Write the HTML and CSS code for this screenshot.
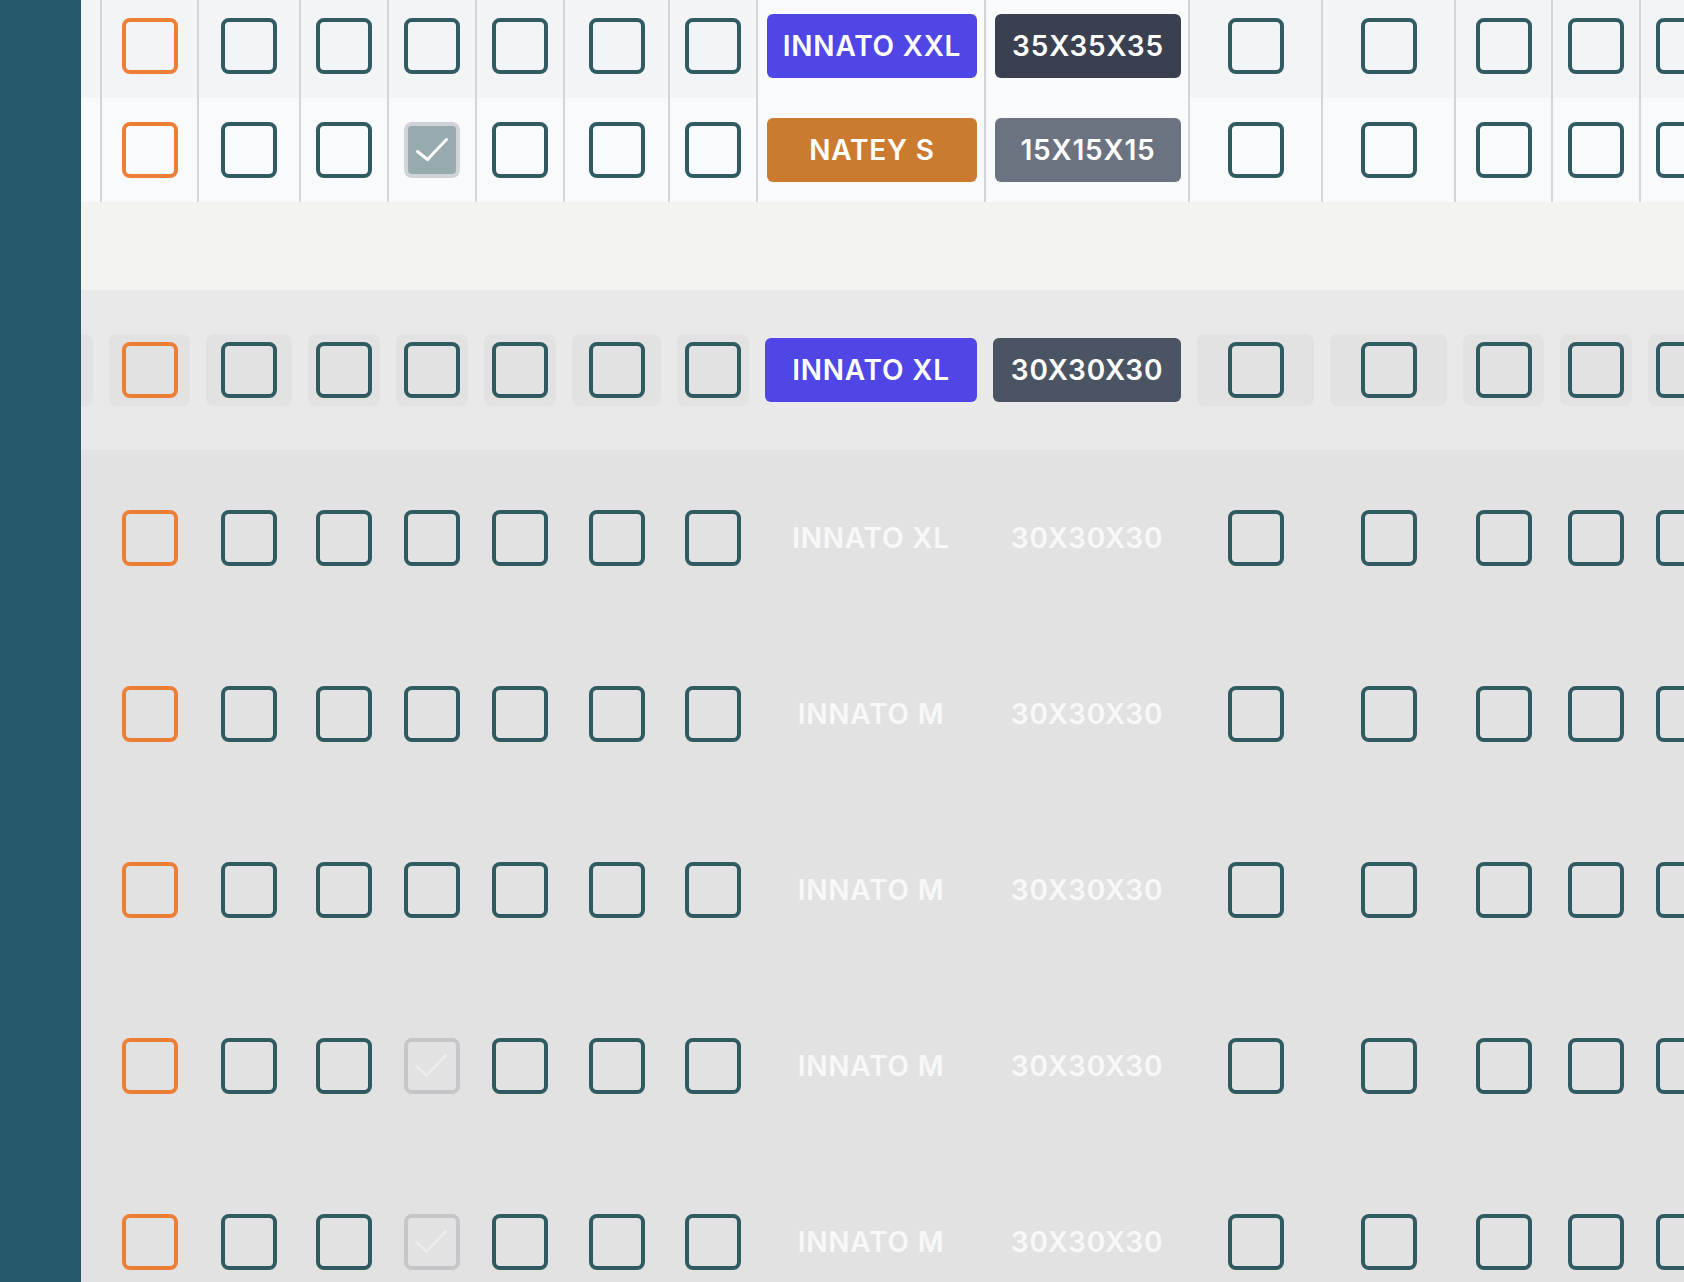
FILE: index.html
```html
<!DOCTYPE html>
<html>
<head>
<meta charset="utf-8">
<link rel="stylesheet" href="styles.css">
</head>
<body>
<div class="app">
  <aside class="sidebar"></aside>
  <main class="main">
    <div class="table">
      <div class="row row-a">
        <div class="cell"></div>
        <div class="cell"><span class="cb cb-orange"></span></div>
        <div class="cell"><span class="cb"></span></div>
        <div class="cell"><span class="cb"></span></div>
        <div class="cell"><span class="cb"></span></div>
        <div class="cell"><span class="cb"></span></div>
        <div class="cell"><span class="cb"></span></div>
        <div class="cell"><span class="cb"></span></div>
        <div class="cell cell-badge"><span class="badge badge-indigo">INNATO XXL</span></div>
        <div class="cell cell-badge"><span class="badge badge-dark">35X35X35</span></div>
        <div class="cell"><span class="cb"></span></div>
        <div class="cell"><span class="cb"></span></div>
        <div class="cell"><span class="cb"></span></div>
        <div class="cell"><span class="cb"></span></div>
        <div class="cell"><span class="cb"></span></div>
      </div>
      <div class="row row-b">
        <div class="cell"></div>
        <div class="cell"><span class="cb cb-orange"></span></div>
        <div class="cell"><span class="cb"></span></div>
        <div class="cell"><span class="cb"></span></div>
        <div class="cell"><span class="cb cb-checked"><svg viewBox="0 0 56 56"><path d="M13.5 29.5 L23.5 37.5 L42.5 17.5"/></svg></span></div>
        <div class="cell"><span class="cb"></span></div>
        <div class="cell"><span class="cb"></span></div>
        <div class="cell"><span class="cb"></span></div>
        <div class="cell cell-badge"><span class="badge badge-orange">NATEY S</span></div>
        <div class="cell cell-badge"><span class="badge badge-gray">15X15X15</span></div>
        <div class="cell"><span class="cb"></span></div>
        <div class="cell"><span class="cb"></span></div>
        <div class="cell"><span class="cb"></span></div>
        <div class="cell"><span class="cb"></span></div>
        <div class="cell"><span class="cb"></span></div>
      </div>
    </div>

    <div class="gap-band"></div>

    <div class="drag-row">
      <div class="dcell"></div>
      <div class="dcell"><span class="cb cb-orange"></span></div>
      <div class="dcell"><span class="cb"></span></div>
      <div class="dcell"><span class="cb"></span></div>
      <div class="dcell"><span class="cb"></span></div>
      <div class="dcell"><span class="cb"></span></div>
      <div class="dcell"><span class="cb"></span></div>
      <div class="dcell"><span class="cb"></span></div>
      <div class="dcell dcell-badge"><span class="badge badge-indigo">INNATO XL</span></div>
      <div class="dcell dcell-badge"><span class="badge badge-slate">30X30X30</span></div>
      <div class="dcell"><span class="cb"></span></div>
      <div class="dcell"><span class="cb"></span></div>
      <div class="dcell"><span class="cb"></span></div>
      <div class="dcell"><span class="cb"></span></div>
      <div class="dcell"><span class="cb"></span></div>
    </div>

    <div class="ghosts">
      <div class="grow">
        <div class="gcell"></div>
        <div class="gcell"><span class="cb cb-orange"></span></div>
        <div class="gcell"><span class="cb"></span></div>
        <div class="gcell"><span class="cb"></span></div>
        <div class="gcell"><span class="cb"></span></div>
        <div class="gcell"><span class="cb"></span></div>
        <div class="gcell"><span class="cb"></span></div>
        <div class="gcell"><span class="cb"></span></div>
        <div class="gcell"><span class="gtext">INNATO XL</span></div>
        <div class="gcell"><span class="gtext">30X30X30</span></div>
        <div class="gcell"><span class="cb"></span></div>
        <div class="gcell"><span class="cb"></span></div>
        <div class="gcell"><span class="cb"></span></div>
        <div class="gcell"><span class="cb"></span></div>
        <div class="gcell"><span class="cb"></span></div>
      </div>
      <div class="grow">
        <div class="gcell"></div>
        <div class="gcell"><span class="cb cb-orange"></span></div>
        <div class="gcell"><span class="cb"></span></div>
        <div class="gcell"><span class="cb"></span></div>
        <div class="gcell"><span class="cb"></span></div>
        <div class="gcell"><span class="cb"></span></div>
        <div class="gcell"><span class="cb"></span></div>
        <div class="gcell"><span class="cb"></span></div>
        <div class="gcell"><span class="gtext">INNATO M</span></div>
        <div class="gcell"><span class="gtext">30X30X30</span></div>
        <div class="gcell"><span class="cb"></span></div>
        <div class="gcell"><span class="cb"></span></div>
        <div class="gcell"><span class="cb"></span></div>
        <div class="gcell"><span class="cb"></span></div>
        <div class="gcell"><span class="cb"></span></div>
      </div>
      <div class="grow">
        <div class="gcell"></div>
        <div class="gcell"><span class="cb cb-orange"></span></div>
        <div class="gcell"><span class="cb"></span></div>
        <div class="gcell"><span class="cb"></span></div>
        <div class="gcell"><span class="cb"></span></div>
        <div class="gcell"><span class="cb"></span></div>
        <div class="gcell"><span class="cb"></span></div>
        <div class="gcell"><span class="cb"></span></div>
        <div class="gcell"><span class="gtext">INNATO M</span></div>
        <div class="gcell"><span class="gtext">30X30X30</span></div>
        <div class="gcell"><span class="cb"></span></div>
        <div class="gcell"><span class="cb"></span></div>
        <div class="gcell"><span class="cb"></span></div>
        <div class="gcell"><span class="cb"></span></div>
        <div class="gcell"><span class="cb"></span></div>
      </div>
      <div class="grow">
        <div class="gcell"></div>
        <div class="gcell"><span class="cb cb-orange"></span></div>
        <div class="gcell"><span class="cb"></span></div>
        <div class="gcell"><span class="cb"></span></div>
        <div class="gcell"><span class="cb cb-ghost-checked"><svg viewBox="0 0 56 56"><path d="M12.5 28 L22.5 37.5 L41.5 17.5"/></svg></span></div>
        <div class="gcell"><span class="cb"></span></div>
        <div class="gcell"><span class="cb"></span></div>
        <div class="gcell"><span class="cb"></span></div>
        <div class="gcell"><span class="gtext">INNATO M</span></div>
        <div class="gcell"><span class="gtext">30X30X30</span></div>
        <div class="gcell"><span class="cb"></span></div>
        <div class="gcell"><span class="cb"></span></div>
        <div class="gcell"><span class="cb"></span></div>
        <div class="gcell"><span class="cb"></span></div>
        <div class="gcell"><span class="cb"></span></div>
      </div>
      <div class="grow">
        <div class="gcell"></div>
        <div class="gcell"><span class="cb cb-orange"></span></div>
        <div class="gcell"><span class="cb"></span></div>
        <div class="gcell"><span class="cb"></span></div>
        <div class="gcell"><span class="cb cb-ghost-checked"><svg viewBox="0 0 56 56"><path d="M12.5 28 L22.5 37.5 L41.5 17.5"/></svg></span></div>
        <div class="gcell"><span class="cb"></span></div>
        <div class="gcell"><span class="cb"></span></div>
        <div class="gcell"><span class="cb"></span></div>
        <div class="gcell"><span class="gtext">INNATO M</span></div>
        <div class="gcell"><span class="gtext">30X30X30</span></div>
        <div class="gcell"><span class="cb"></span></div>
        <div class="gcell"><span class="cb"></span></div>
        <div class="gcell"><span class="cb"></span></div>
        <div class="gcell"><span class="cb"></span></div>
        <div class="gcell"><span class="cb"></span></div>
      </div>
    </div>
  </main>
</div>
</body>
</html>
```

FILE: styles.css
```css
* { box-sizing: border-box; }

html, body {
  margin: 0;
  padding: 0;
  width: 1684px;
  height: 1282px;
  overflow: hidden;
  font-family: Inter, "Noto Sans", "Liberation Sans", sans-serif;
}

.app {
  display: flex;
  width: 1684px;
  height: 1282px;
}

.sidebar {
  flex: 0 0 81px;
  background: #255869;
}

.main {
  flex: 1 1 auto;
  min-width: 0;
  overflow: hidden;
  background: #e2e2e2;
  display: flex;
  flex-direction: column;
}

/* shared column template (table is scrolled 67px to the left) */
.row,
.drag-row,
.grow {
  display: grid;
  grid-template-columns: 88px 97px 102px 88px 88px 88px 105px 88px 228px 204px 133px 133px 97px 88px 88px;
  margin-left: -67px;
  width: max-content;
}

.table {
  margin-top: -6px;
}

.row {
  height: 104px;
}

.row-a { background: #f3f4f6; }
.row-b { background: #f9fafb; }

.cell {
  display: flex;
  align-items: center;
  justify-content: center;
  border-right: 2px solid #d3d5da;
}

.row-a .cell-badge { background: #f9fafb; }

.cell-badge {
  padding: 0 7px 0 9px;
}

/* checkbox */
.cb {
  display: block;
  width: 56px;
  height: 56px;
  border: 4px solid #305b63;
  border-radius: 8px;
  flex: 0 0 auto;
}

.cb-orange { border-color: #ed7e36; }

.cb svg {
  display: block;
  width: 56px;
  height: 56px;
  margin: -4px;
}

.cb svg path {
  fill: none;
  stroke-width: 3;
  stroke-linecap: round;
  stroke-linejoin: round;
}

.cb-checked {
  background: #97abae;
  border-color: #d0d3d8;
}
.cb-checked svg path { stroke: #ffffff; }

.cb-ghost-checked {
  border-color: #c4c6ca;
}
.cb-ghost-checked svg path { stroke: #ececec; }

/* badges */
.badge {
  display: flex;
  align-items: center;
  justify-content: center;
  width: 100%;
  height: 64px;
  border-radius: 6px;
  color: #ffffff;
  font-size: 28px;
  font-weight: 600;
  letter-spacing: 0.8px;
  white-space: nowrap;
}

.badge-indigo { background: #4f46e5; }
.badge-dark { background: #3a4050; }
.badge-orange { background: #cb7b2f; }
.badge-gray { background: #6b7280; }
.badge-slate { background: #4b5462; }

/* cream band */
.gap-band {
  flex: 0 0 88px;
  background: #f3f4ef;
}

/* dragged row */
.drag-row {
  flex: 0 0 160px;
  height: 160px;
  background: #e9e9e9;
  align-items: center;
  margin-left: -68px;
  width: calc(100% + 68px);
}

.dcell {
  height: 72px;
  margin: 0 8px;
  border-radius: 8px;
  background: #e2e2e2;
  display: flex;
  align-items: center;
  justify-content: center;
}

.dcell-badge {
  background: transparent;
  height: 64px;
}

/* ghost rows */
.ghosts {
  background: #e2e2e2;
}

.grow {
  height: 176px;
  align-items: center;
}

.gcell {
  display: flex;
  align-items: center;
  justify-content: center;
  padding-right: 2px;
}

.gtext {
  color: #f8f8f8;
  font-size: 28px;
  font-weight: 600;
  letter-spacing: 0.8px;
  white-space: nowrap;
}
```
